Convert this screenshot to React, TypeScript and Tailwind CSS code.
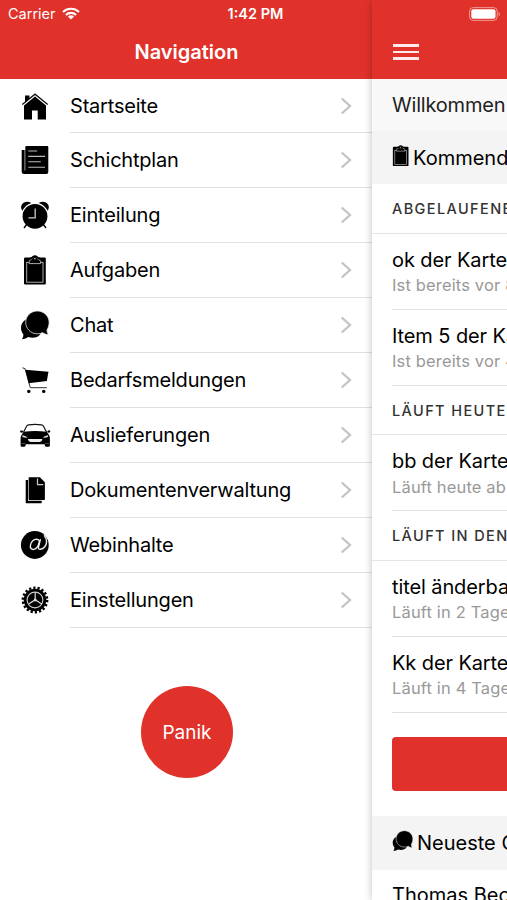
import type { ReactNode } from "react";

type GlyphProps = {
  className?: string;
  children: ReactNode;
};

type IconProps = {
  className?: string;
};

function Glyph({ className = "size-[30px]", children }: GlyphProps) {
  return (
    <svg className={`shrink-0 overflow-visible ${className}`} viewBox="0 0 30 30">
      {children}
    </svg>
  );
}

function HomeIcon() {
  return (
    <Glyph>
      <path d="M5 4.600h4.500v3.200L5 11.800z" />
      <path d="M2.300 13.600 15 3.200l12.700 10.400" fill="none" stroke="#111" strokeWidth="1.300" />
      <path d="M15 5.400 26 14.600v13.900h-8.300v-9H12v9H4V14.600z" />
    </Glyph>
  );
}

function PaperIcon() {
  return (
    <Glyph>
      <path d="M6.500 1h20.800q1 0 1 1v25q0 2-2 2H4q-2.300 0-2.300-2V5h3.600V2q0-1 1.200-1z" />
      <path d="M4.900 5v20.500" stroke="#aaa" strokeWidth="0.9" />
      <path d="M8.300 6h8.900M8.300 11.400H25M8.300 16.700h12.500M8.300 22.200H25" stroke="#bbb" strokeWidth="1.100" />
    </Glyph>
  );
}

function AlarmIcon() {
  return (
    <Glyph>
      <path d="M2.300 10.800C-1.600 4.800 5-.8 11.300 2.900 7.200 4.200 4.300 7 2.300 10.800z" />
      <path d="M27.700 10.800C31.600 4.800 25-.8 18.700 2.900c4.100 1.300 7 4.100 9 7.900z" />
      <circle cx="15" cy="16.300" r="12.400" />
      <path d="m7 24-3 4M23 24l3 4" stroke="#000" strokeWidth="1.400" />
      <path d="M15.200 8.400v9.400H8.400" fill="none" stroke="#ccc" strokeWidth="1.300" />
    </Glyph>
  );
}

function ClipboardIcon({ className }: IconProps) {
  return (
    <Glyph className={className}>
      <rect x="4" y="2.600" width="21.800" height="26.800" rx="1.200" />
      <rect x="6.700" y="7.400" width="16.300" height="19.800" fill="none" stroke="#bbb" strokeWidth="0.900" />
      <path
        d="M9.200 8.600V6.400q0-1 1.100-1.200 1.600-.2 2-1.900C12.700.8 17.100.8 17.500 3.300q.4 1.700 2 1.900 1.100.2 1.100 1.200v2.200z"
        stroke="#bbb"
        strokeWidth="0.900"
      />
      <path d="M9.800 2.600q2 0 2.500-1.300 2.600-2 5.200 0 .5 1.300 2.500 1.300l-.8 1.700h-1.500Q17.500 2 15 2t-2.700 2.300h-1.700z" />
      <circle cx="14.900" cy="3.800" r="0.800" fill="#ddd" />
    </Glyph>
  );
}

function ChatIcon({ className }: IconProps) {
  return (
    <Glyph className={className}>
      <path d="M11 8C4.800 8.500 1 12.900 1 18c0 2.600 1 4.500 2.300 6.200.2 1.900-.4 3.500-1.300 5 2.600-.1 4.700-.8 6.300-2.100 4.700 1.500 9.600.4 12.200-3.200z" />
      <path
        d="M17.300 1C10.800 1 5.700 6 5.700 12.300s5 11.500 11.600 11.500c2 0 3.700-.4 5.300-1.200 1.600 1.300 3.500 1.900 5.800 2-.9-1.400-1.500-2.800-1.400-4.800 1.300-2 2.100-4.600 2.100-7.500C29.100 6 23.800 1 17.300 1z"
        stroke="#ddd"
        strokeWidth="0.800"
      />
    </Glyph>
  );
}

function CartIcon() {
  return (
    <Glyph>
      <path d="M2.300 2.800 5 3.600l5.300 19.100h16.500" fill="none" stroke="#333" strokeWidth="1" />
      <path d="m5.300 4.700 23.200 2-1.700 9.300-18.100 2.300z" />
      <circle cx="8.800" cy="26.400" r="1.700" />
      <circle cx="23.700" cy="26.400" r="1.700" />
    </Glyph>
  );
}

function CarIcon() {
  return (
    <Glyph>
      <path d="M3.500 12.200 6.700 6q.7-1 2-1.200 6.300-.9 12.700 0 1.300.2 2 1.200l3.200 6.200" fill="#fff" stroke="#111" strokeWidth="1.200" />
      <path d="M3.700 11.800Q15 10.300 26.700 11.800l2.300 3.100q1 1.600.9 4v6.500q0 1.300-1.300 1.300h-2.500q-1 0-1.200-1.200l-.3-1.200H5.800l-.3 1.200q-.2 1.200-1.200 1.200H1.900Q.6 26.700.6 25.400v-6.500q-.1-2.400.9-4z" />
      <path d="M.2 10.600h2.300l.7 1.700q-1.800.8-3-.2zM30.200 10.600h-2.300l-.7 1.700q1.800.8 3-.2z" />
      <path d="M2.100 15.300q3.300.1 5.500 2.300-2.800.4-5.100-.7zM28.300 15.300q-3.300.1-5.500 2.300 2.800.4 5.100-.7z" fill="#ddd" />
      <path d="M8.500 18.900h13.300q.9 0 .4 1.200-.6 1.800-2.400 1.800h-9.300q-1.800 0-2.400-1.800-.5-1.200.4-1.200z" fill="#eee" />
      <path d="M1.400 23.600h4M25.200 23.600h4" stroke="#888" strokeWidth="0.600" />
    </Glyph>
  );
}

function DocumentsIcon() {
  return (
    <Glyph>
      <path d="M5.700 5H8v20.800h13.700v2q0 .4-.5.400H6.200q-.5 0-.5-.5z" />
      <path d="M9.300 2.200h10.600l5 5v17q0 .8-.8.800H9.400q-.8 0-.8-.8V3q0-.8.7-.8z" />
      <path d="M17.500 3.600v6h5.800" fill="none" stroke="#ccc" strokeWidth="1.200" />
    </Glyph>
  );
}

function AtIcon() {
  return (
    <Glyph>
      <circle cx="14.800" cy="15" r="13.900" />
      <g fill="none" stroke="#eee" strokeWidth="1.400" strokeLinecap="round">
        <path d="M19.400 10.600c-1.400-1.900-4.600-1.900-6.600.1-2.500 2.400-3.300 6.500-1.500 8.100 1.700 1.500 4.900.2 6.600-2.700 1-1.700 1.500-3.600 1.500-5.500z" />
        <path d="M20.300 9.800 18.500 17c-.4 1.700.4 2.500 2 2.300 3.300-.4 6-3.700 6.100-7.600 0-2.500-.8-4.400-2.200-6" />
      </g>
    </Glyph>
  );
}

function GearIcon() {
  return (
    <Glyph>
      <circle cx="15" cy="15" r="12.200" fill="none" stroke="#000" strokeWidth="2.400" strokeDasharray="2.250 2.008" />
      <circle cx="15" cy="15" r="11.300" />
      <circle cx="15" cy="15" r="7.900" fill="none" stroke="#ccc" strokeWidth="1.100" />
      <path d="M15.200 7.200v7.600L8.600 19M15.200 14.800l6.500 4.200" fill="none" stroke="#ddd" strokeWidth="1.200" />
      <circle cx="15.200" cy="15" r="1.400" fill="#ddd" />
    </Glyph>
  );
}

const menu = [
  { label: "Startseite", icon: HomeIcon },
  { label: "Schichtplan", icon: PaperIcon },
  { label: "Einteilung", icon: AlarmIcon },
  { label: "Aufgaben", icon: ClipboardIcon },
  { label: "Chat", icon: ChatIcon },
  { label: "Bedarfsmeldungen", icon: CartIcon },
  { label: "Auslieferungen", icon: CarIcon },
  { label: "Dokumentenverwaltung", icon: DocumentsIcon },
  { label: "Webinhalte", icon: AtIcon },
  { label: "Einstellungen", icon: GearIcon },
];

const groups = [
  {
    title: "ABGELAUFENE",
    items: [
      { title: "ok der Karte", note: "Ist bereits vor 8" },
      { title: "Item 5 der Karte", note: "Ist bereits vor 4" },
    ],
  },
  { title: "LÄUFT HEUTE", items: [{ title: "bb der Karte", note: "Läuft heute ab" }] },
  {
    title: "LÄUFT IN DEN",
    items: [
      { title: "titel änderbar", note: "Läuft in 2 Tagen" },
      { title: "Kk der Karte", note: "Läuft in 4 Tagen" },
    ],
  },
];

function Wifi() {
  return (
    <svg className="ml-[6px] h-[13px] w-[18px]" viewBox="0 0 18 13" fill="none" stroke="#fff" strokeWidth="2.1">
      <path d="M1 4.900a11.600 11.600 0 0 1 16 0" />
      <path d="M3.900 7.900a7.400 7.400 0 0 1 10.200 0" />
      <path d="M9 12.600 5.900 9.600a4.500 4.500 0 0 1 6.200 0z" fill="#fff" stroke="none" />
    </svg>
  );
}

function Battery() {
  return (
    <svg className="h-[14px] w-8" viewBox="0 0 32 14">
      <rect x="0.6" y="0.6" width="27.6" height="12.8" rx="3.6" fill="none" stroke="#fff" strokeOpacity="0.5" />
      <rect x="2.3" y="2.3" width="24.2" height="9.4" rx="2" fill="#fff" />
      <path d="M29.600 5v4.200c1.800-.7 1.800-3.500 0-4.200z" fill="#fff" fillOpacity="0.5" />
    </svg>
  );
}

function Chevron() {
  return (
    <svg className="mr-5 h-[18px] w-3" viewBox="0 0 12 18" fill="none" stroke="#c4c4c6" strokeWidth="2.300">
      <path d="M1.700 1.500 10 9l-8.300 7.500" />
    </svg>
  );
}

function Menu() {
  return (
    <aside className="flex w-[372px] shrink-0 flex-col bg-white">
      <header className="flex h-[79px] flex-col bg-[#e0322a] text-white">
        <div className="flex h-[27px] items-center pl-2">
          <span className="text-[14.5px]">Carrier</span>
          <Wifi />
          <span className="ml-[148px] text-[14.5px] font-semibold whitespace-nowrap">1:42 PM</span>
        </div>
        <h1 className="pt-2.5 pl-px text-center text-[20px] leading-[30px] font-semibold">Navigation</h1>
      </header>
      <ul>
        {menu.map(({ label, icon: Icon }) => (
          <li key={label} className="flex h-[55px] items-center first:h-[54px]">
            <span className="flex w-[70px] pb-px pl-5">
              <Icon />
            </span>
            <span className="flex h-full flex-1 items-center justify-between border-b border-[#e0e0e0]">
              <span className="text-[20px] tracking-[-0.2px]">{label}</span>
              <Chevron />
            </span>
          </li>
        ))}
      </ul>
      <button className="mt-[58px] ml-[141px] size-[92px] rounded-full bg-[#e0322a] pt-0.5 text-[19px] text-white">
        Panik
      </button>
    </aside>
  );
}

function Home() {
  return (
    <main className="relative w-[135px] shrink-0 overflow-hidden bg-white whitespace-nowrap shadow-[0_0_8px_rgba(0,0,0,0.25)]">
      <header className="flex h-[79px] flex-col bg-[#e0322a]">
        <div className="flex h-[27px] items-center justify-end pr-1.5">
          <Battery />
        </div>
        <div className="mt-[17px] ml-[21px] flex w-[26px] flex-col gap-1">
          <i className="h-[2.5px] bg-white/90" />
          <i className="h-[2.5px] bg-white/90" />
          <i className="h-[2.5px] bg-white/90" />
        </div>
      </header>
      <p className="flex h-[52px] items-center bg-[#f8f8f8] pl-5 text-[20px] tracking-[-0.2px] text-[#222]">Willkommen</p>
      <h2 className="flex h-[53px] items-center gap-[2px] bg-[#f4f4f4] pl-[17.5px] text-[20px]">
        <ClipboardIcon className="mb-[3px] size-[21.5px]" />
        Kommende
      </h2>
      {groups.map((group) => (
        <section key={group.title}>
          <h3 className="flex h-[49.5px] items-center border-b border-[#e4e4e4] pt-[2px] pl-5 text-[14.5px] font-medium tracking-[1.4px] text-[#333]">
            {group.title}
          </h3>
          {group.items.map((item) => (
            <div key={item.title} className="ml-5 h-[76px] border-b border-[#e0e0e0] pt-[11px]">
              <p className="text-[20px] leading-[30px] tracking-[-0.1px]">{item.title}</p>
              <p className="-mt-[0.5px] text-[16.5px] leading-[22px] tracking-[0.15px] text-[#999]">{item.note}</p>
            </div>
          ))}
        </section>
      ))}
      <button className="mt-6 ml-5 block h-[54px] w-[300px] rounded-[4px] bg-[#e0322a]" />
      <h2 className="mt-[25px] flex h-[54px] items-center gap-[4px] bg-[#f4f4f4] pl-[19.5px] text-[20px]">
        <ChatIcon className="mb-1 size-[21.5px]" />
        Neueste C
      </h2>
      <p className="pt-[10px] pl-5 text-[20px]">Thomas Beck</p>
    </main>
  );
}

export default function App() {
  return (
    <div className="flex h-[900px] w-[507px] overflow-hidden bg-white font-[Inter,sans-serif] text-black">
      <Menu />
      <Home />
    </div>
  );
}
